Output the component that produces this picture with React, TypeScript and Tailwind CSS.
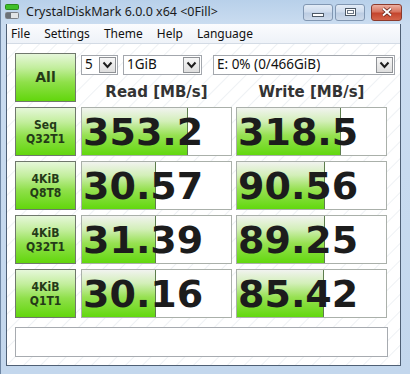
import React from 'react';

// Benchmark results
const results = [
  { label: ['Seq', 'Q32T1'], read: '353.2', write: '318.5' },
  { label: ['4KiB', 'Q8T8'], read: '30.57', write: '90.56' },
  { label: ['4KiB', 'Q32T1'], read: '31.39', write: '89.25' },
  { label: ['4KiB', 'Q1T1'], read: '30.16', write: '85.42' },
];

// Meter uses a log scale: 0.1 MB/s .. 10000 MB/s
const meter = (v: string) => Math.min(100, (Math.log10(parseFloat(v) * 10) / 5) * 100);

const greenBg =
  'bg-[linear-gradient(to_bottom,#e6f7da_0%,#c2ee9c_30%,#8fe04a_60%,#62d60c_100%)]';

const GreenButton: React.FC<{ children: React.ReactNode; className?: string }> = ({ children, className }) => (
  <div
    className={`flex shrink-0 flex-col items-center justify-center border border-[#6f786c] ${greenBg} font-bold text-[#243a18] ${className ?? ''}`}
  >
    {children}
  </div>
);

const Score: React.FC<{ value: string }> = ({ value }) => (
  <div className="relative h-full w-[151px] shrink-0 border border-[#aab0aa] bg-white">
    <div
      className="absolute inset-y-0 left-0 border-r border-[#5d7d4d] bg-[linear-gradient(to_bottom,#f1f3ef_0%,#d3efb9_28%,#97e152_58%,#62d80e_100%)]"
      style={{ width: `${meter(value)}%` }}
    />
    <span className="relative flex h-full items-center pl-[1px] font-['DejaVu_Sans',sans-serif] text-[38px] font-bold leading-none text-[#1c1c1c]">
      {value}
    </span>
  </div>
);

const Combo: React.FC<{ value: string; width: string }> = ({ value, width }) => (
  <div className={`flex h-[20px] ${width} items-center border border-[#a3a7ad] bg-white`}>
    <span className="flex-1 pl-[3px] text-[13.5px] leading-none text-[#111]">{value}</span>
    <div className="m-[1px] flex h-[16px] w-[17px] items-center justify-center border border-[#8f9296] bg-[linear-gradient(to_bottom,#f7f7f7,#dedede)]">
      <svg width="11" height="8" viewBox="0 0 11 8">
        <path d="M1.5 1.5 L5.5 6 L9.5 1.5" fill="none" stroke="#1e1e1e" strokeWidth="2" />
      </svg>
    </div>
  </div>
);

const TitleIcon = () => (
  <svg width="16" height="16" viewBox="0 0 16 16">
    <rect x="0.5" y="0.5" width="13" height="5" rx="1" fill="#3fbf2a" stroke="#2a8a1c" />
    <rect x="0.5" y="8.5" width="13" height="6" rx="1" fill="#e2e4e6" stroke="#7c8086" />
    <rect x="1" y="9" width="5" height="5" fill="#6c7278" />
  </svg>
);

const WinButton: React.FC<{ kind: 'min' | 'max' | 'close' }> = ({ kind }) => {
  if (kind === 'close') {
    return (
      <div className="flex h-[17px] w-[31px] items-center justify-center rounded-[3px] border border-[#8c3a2c] bg-[linear-gradient(to_bottom,#ecb0a2_0%,#d7745f_45%,#c4452d_55%,#d4644a_100%)]">
        <svg width="12" height="10" viewBox="0 0 12 10">
          <path d="M2 1.5 L10 8.5 M10 1.5 L2 8.5" stroke="#5a1a10" strokeWidth="3.4" />
          <path d="M2 1.5 L10 8.5 M10 1.5 L2 8.5" stroke="#ffffff" strokeWidth="2" />
        </svg>
      </div>
    );
  }
  return (
    <div className="flex h-[17px] w-[30px] items-center justify-center rounded-[3px] border border-[#8197b2] bg-[linear-gradient(to_bottom,#e3ecf7_0%,#cfdced_45%,#bccde3_55%,#cddaea_100%)]">
      {kind === 'min' ? (
        <div className="mt-[6px] h-[4px] w-[12px] border border-[#4d5966] bg-white" />
      ) : (
        <div className="h-[8px] w-[11px] border border-[#4d5966] bg-white p-[1px]">
          <div className="h-full w-full border border-[#6b7684]" />
        </div>
      )}
    </div>
  );
};

const App: React.FC = () => {
  return (
    <div className="flex h-[374px] w-[410px] flex-col overflow-hidden border-l border-[#6f87a4] bg-[linear-gradient(to_bottom,#b8d0ea_0px,#cadcf0_24px,#c3d7ed_100%)] font-['Noto_Sans',sans-serif]">
      {/* Title bar */}
      <div className="flex h-[24px] shrink-0 items-center pl-[4px] pr-[8px]">
        <TitleIcon />
        <span className="ml-[5px] text-[12.5px] text-[#1b1b1b]">CrystalDiskMark 6.0.0 x64 &lt;0Fill&gt;</span>
        <div className="ml-auto flex items-center gap-[2px]">
          <WinButton kind="min" />
          <WinButton kind="max" />
          <div className="w-[2px]" />
          <WinButton kind="close" />
        </div>
      </div>

      {/* Window body */}
      <div className="flex flex-1 flex-col pl-[5px] pr-[9px] pb-[8px]">
        <div className="flex flex-1 flex-col border-x border-b border-[#4f6075]">
          {/* Menu bar */}
          <div className="flex h-[20px] shrink-0 items-center gap-[14px] border-b border-[#d3dbe5] bg-[linear-gradient(to_bottom,#fbfcfe,#eef2f8)] pl-[4px] text-[12px] text-[#111]">
            <span>File</span>
            <span>Settings</span>
            <span>Theme</span>
            <span>Help</span>
            <span>Language</span>
          </div>

          {/* Client area */}
          <div className="flex flex-1 flex-col bg-white bg-[image:repeating-linear-gradient(135deg,#ffffff_0px,#ffffff_10px,#eef1f4_11px,#ffffff_12px)] pl-[8px] pt-[9px]">
            <div className="flex">
              <GreenButton className="h-[49px] w-[61px] font-['DejaVu_Sans',sans-serif] text-[14px]">All</GreenButton>
              <div className="ml-[5px] flex flex-col">
                <div className="mt-[2px] flex gap-[5px]">
                  <Combo value="5" width="w-[37px]" />
                  <Combo value="1GiB" width="w-[79px]" />
                  <div className="w-[1px]" />
                  <Combo value="E: 0% (0/466GiB)" width="w-[182px]" />
                </div>
                <div className="flex h-[27px] items-end gap-[4px] pb-[2px] font-['DejaVu_Sans',sans-serif] text-[15px] font-bold leading-none text-[#333]">
                  <div className="w-[151px] text-center">Read [MB/s]</div>
                  <div className="w-[151px] text-center">Write [MB/s]</div>
                </div>
              </div>
            </div>

            <div className="mt-[5px] flex flex-col gap-[5px]">
              {results.map((r) => (
                <div key={r.label.join('-')} className="flex h-[49px]">
                  <GreenButton className="h-[49px] w-[61px] font-['DejaVu_Sans_Condensed','DejaVu_Sans',sans-serif] text-[12px] leading-[14px]">
                    <span>{r.label[0]}</span>
                    <span>{r.label[1]}</span>
                  </GreenButton>
                  <div className="ml-[5px] flex gap-[4px]">
                    <Score value={r.read} />
                    <Score value={r.write} />
                  </div>
                </div>
              ))}
            </div>

            {/* Comment box */}
            <div className="mt-[9px] h-[30px] w-[373px] border border-[#a7abb0] bg-white" />
          </div>
        </div>
      </div>
    </div>
  );
};

export default App;
